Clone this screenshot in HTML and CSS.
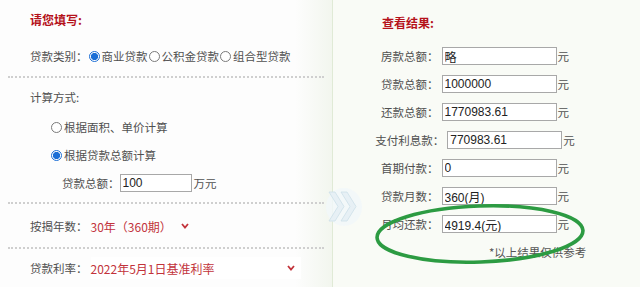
FILE: index.html
```html
<!DOCTYPE html>
<html lang="zh-CN">
<head>
<meta charset="utf-8">
<title>房贷计算器</title>
<link rel="stylesheet" href="styles.css">
</head>
<body>
<div class="page">
  <div class="left">
    <div class="title">请您填写:</div>
    <div class="row">
      <span class="lbl">贷款类别：</span>
      <span class="radio on"></span><span>商业贷款</span>
      <span class="radio"></span><span>公积金贷款</span>
      <span class="radio"></span><span>组合型贷款</span>
    </div>
    <div class="dots"></div>
    <div class="row gap5">计算方式:</div>
    <div class="row sub gap2"><span class="radio"></span><span>根据面积、单价计算</span></div>
    <div class="row sub"><span class="radio on"></span><span>根据贷款总额计算</span></div>
    <div class="row amount"><span>贷款总额：</span><input class="box small" type="text" value="100"><span class="unit">万元</span></div>
    <div class="dots"></div>
    <div class="row gap8">
      <span class="lbl">按揭年数：</span>
      <div class="select"><span>30年（360期）</span><svg class="chev" width="8" height="6" viewBox="0 0 8 6"><polyline points="1,1 4,4.5 7,1" fill="none" stroke="#c2333b" stroke-width="1.8"/></svg></div>
    </div>
    <div class="dots dots7"></div>
    <div class="row gap5">
      <span class="lbl">贷款利率：</span>
      <div class="select wide"><span>2022年5月1日基准利率</span><svg class="chev" width="8" height="6" viewBox="0 0 8 6"><polyline points="1,1 4,4.5 7,1" fill="none" stroke="#c2333b" stroke-width="1.8"/></svg></div>
    </div>
  </div>
  <div class="right">
    <div class="rtitle">查看结果:</div>
    <div class="rrow"><span class="lbl">房款总额：</span><input class="box" type="text" value="略"><span>元</span></div>
    <div class="rrow"><span class="lbl">贷款总额：</span><input class="box" type="text" value="1000000"><span>元</span></div>
    <div class="rrow"><span class="lbl">还款总额：</span><input class="box" type="text" value="1770983.61"><span>元</span></div>
    <div class="rrow"><span class="lbl">支付利息款：</span><input class="box" type="text" value="770983.61"><span>元</span></div>
    <div class="rrow"><span class="lbl">首期付款：</span><input class="box" type="text" value="0"><span>元</span></div>
    <div class="rrow"><span class="lbl">贷款月数：</span><input class="box" type="text" value="360(月)"><span>元</span></div>
    <div class="rrow"><span class="lbl">月均还款：</span><input class="box" type="text" value="4919.4(元)"><span>元</span></div>
    <div class="note">*以上结果仅供参考</div>
  </div>
  <svg class="arrow" width="36" height="40" viewBox="0 0 36 40">
    <ellipse cx="18" cy="20" rx="18" ry="19" fill="#f1f7fa" opacity="0.8"/>
    <polygon points="3,5 9,5 18,19.5 9,34 3,34 12,19.5" fill="#e7f0f5" stroke="#cddfe9" stroke-width="0.8"/>
    <polygon points="15,5 21,5 30,19.5 21,34 15,34 24,19.5" fill="#e7f0f5" stroke="#cddfe9" stroke-width="0.8"/>
  </svg>
  <svg class="circle" width="640" height="287" viewBox="0 0 640 287">
    <ellipse cx="480" cy="234" rx="103" ry="28" fill="none" stroke="#2c9b42" stroke-width="3.6" transform="rotate(-2 480 234)"/>
  </svg>
</div>
</body>
</html>
```
FILE: styles.css
```css
html, body {
  margin: 0;
  padding: 0;
}
body {
  width: 640px;
  height: 287px;
  overflow: hidden;
  font-family: "Noto Sans CJK SC", "Noto Sans", sans-serif;
  font-size: 11.5px;
  color: #505050;
}
.page {
  position: relative;
  display: flex;
  width: 640px;
  height: 287px;
}
.left {
  width: 332px;
  padding-top: 8px;
  background: linear-gradient(to right, #fdfdfd 0, #fdfdfd 295px, #f2f6ee 332px);
  border-right: 1px solid #e0ead6;
}
.title {
  height: 24px;
  line-height: 24px;
  padding-left: 30px;
  color: #b5121b;
  font-weight: bold;
  font-size: 12px;
}
.row {
  display: flex;
  align-items: center;
  height: 28px;
  padding-left: 30px;
  white-space: nowrap;
}
.title + .row { margin-top: 10px; }
.gap5 { margin-top: 5px; }
.gap2 { margin-top: 2px; }
.gap8 { margin-top: 8px; }
.sub { padding-left: 50px; }
.amount { padding-left: 62px; }
.radio {
  box-sizing: border-box;
  width: 11px;
  height: 11px;
  margin: 0 2px 0 1px;
  border: 1px solid #7a7a7a;
  border-radius: 50%;
  background: #fff;
  flex: none;
}
.radio.on {
  border: 1px solid #1c6fd6;
  background: radial-gradient(circle, #1c6fd6 0, #1c6fd6 3.2px, #ffffff 4px);
}
.dots {
  margin: 5px 8px 0 8px;
  border-top: 2px dotted #cfcfcf;
}
.title + .row + .dots { margin-top: 6px; }
.dots7 { margin-top: 7px; }
.box {
  box-sizing: border-box;
  width: 115px;
  height: 18px;
  margin: 0 1px 0 3px;
  padding: 0 0 0 2px;
  border: 1px solid #a8a8a8;
  background: #fff;
  font-family: "Liberation Sans", "Noto Sans CJK SC", sans-serif;
  font-size: 12px;
  color: #222;
  outline: none;
}
.box.small {
  width: 72px;
  margin-left: 0;
}
.unit { margin-left: 1px; }
.select {
  display: flex;
  align-items: center;
  margin-left: 3px;
  color: #c2333b;
  font-size: 12px;
}
.select .chev { margin-left: 9px; }
.select.wide {
  width: 210px;
  height: 22px;
  background: #fff;
  justify-content: space-between;
  padding-right: 6px;
  box-sizing: border-box;
}
.right {
  flex: 1;
  padding: 11px 23px 0 0;
  background: #f9fbf6;
}
.rtitle {
  height: 24px;
  line-height: 24px;
  padding-left: 49px;
  color: #b5121b;
  font-weight: bold;
  font-size: 12px;
}
.rrow {
  display: flex;
  align-items: center;
  justify-content: center;
  height: 28px;
  white-space: nowrap;
}
.rtitle + .rrow { margin-top: 7px; }
.note {
  height: 28px;
  line-height: 28px;
  padding-left: 156px;
  white-space: nowrap;
  color: #555;
}
.arrow {
  position: absolute;
  left: 326px;
  top: 187px;
}
.circle {
  position: absolute;
  left: 0;
  top: 0;
  pointer-events: none;
}
```
